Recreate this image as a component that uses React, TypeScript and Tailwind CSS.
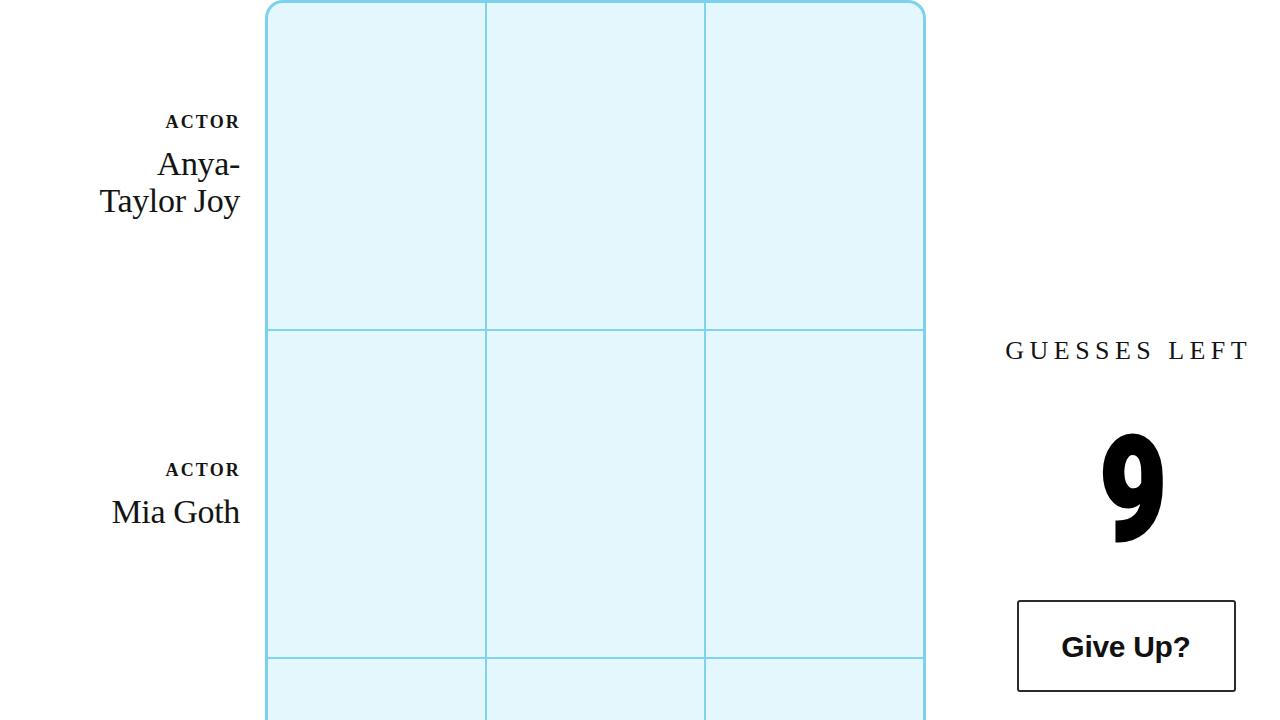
const rows = [
  { kind: "ACTOR", name: ["Anya-", "Taylor Joy"] },
  { kind: "ACTOR", name: ["Mia Goth"] },
  { kind: "", name: [] },
];

const serif = { fontFamily: '"Liberation Serif", "DejaVu Serif", serif' };

export default function App() {
  return (
    <div className="h-screen w-full overflow-hidden bg-white text-[#141414]">
      <div className="flex">
        {/* Row labels */}
        <div className="w-[240px] shrink-0" style={serif}>
          {rows.map((row, i) => (
            <div
              key={i}
              className={`flex flex-col items-end justify-center text-right ${
                i === 0 ? "h-[329px] pt-[2px]" : "h-[328px] pt-[4px]"
              }`}
            >
              {row.kind && (
                <div className="mr-[-1px] text-[18px] font-bold leading-[20px] tracking-[0.12em]">
                  {row.kind}
                </div>
              )}
              {row.name.length > 0 && (
                <div className="mt-[13px] text-[34px] leading-[37px] tracking-[-0.01em]">
                  {row.name.map((n) => (
                    <div key={n}>{n}</div>
                  ))}
                </div>
              )}
            </div>
          ))}
        </div>

        {/* Board */}
        <div className="ml-[25px] w-[661px] shrink-0 overflow-hidden rounded-t-[18px] border-[3px] border-b-0 border-[#7dd1ee] bg-[#80d3ef]">
          <div className="grid grid-cols-3 gap-[2px]">
            {Array.from({ length: 9 }).map((_, i) => (
              <div key={i} className="h-[326px] bg-[#e3f7fd]" />
            ))}
          </div>
        </div>

        {/* Guesses */}
        <div className="ml-[65px] flex w-[270px] shrink-0 flex-col items-center pt-[337px]">
          <div
            className="mr-[-0.21em] text-[26px] leading-[28px] tracking-[0.21em]"
            style={serif}
          >
            GUESSES LEFT
          </div>
          <div
            className="ml-[14px] mt-[62px] h-[127px] scale-x-[0.8] text-[145px] font-black leading-[127px] text-black [-webkit-text-stroke:3px_#000]"
            style={{ fontFamily: 'Roboto, "Liberation Sans", sans-serif' }}
          >
            9
          </div>
          <button
            className="mt-[46px] flex h-[92px] w-[219px] items-center justify-center rounded-[3px] border-2 border-[#2b2b2b] bg-white text-[30px] font-bold tracking-[-0.01em] text-[#111]"
            style={{ fontFamily: '"Liberation Sans", Arial, sans-serif' }}
          >
            Give Up?
          </button>
        </div>
      </div>
    </div>
  );
}
